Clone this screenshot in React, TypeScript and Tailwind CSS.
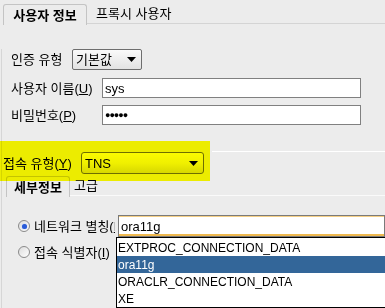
import React from "react";

const F = { fontFamily: '"Liberation Sans","Noto Sans CJK KR",sans-serif' };

function Arrow() {
  return (
    <svg width="9" height="5" viewBox="0 0 9 5">
      <polygon points="0,0 9,0 4.5,5" fill="#000" />
    </svg>
  );
}

function Radio({ checked }: { checked?: boolean }) {
  return (
    <div className="w-[12px] h-[12px] rounded-full border border-[#8a8a8a] bg-gradient-to-br from-[#dcdcdc] to-[#ffffff] flex items-center justify-center shrink-0">
      {checked && <div className="w-[5px] h-[5px] rounded-full bg-[#2a5bd7] shadow-[0_0_1px_#6f9cff]" />}
    </div>
  );
}

export default function App() {
  return (
    <div style={F} className="relative w-[385px] h-[308px] bg-[#ececec] overflow-hidden text-[13px] text-black leading-none">
      {/* top tabs */}
      <div className="flex items-end h-[24px] pl-[3px]">
        <div className="h-[21px] w-[84px] border border-b-0 border-[#c4c4c4] rounded-t-[3px] bg-[#ececec] flex items-center justify-center font-bold text-[13px] relative top-px">
          사용자 정보
        </div>
        <div className="flex-1 h-[21px] border-b border-[#d4d4d4] flex items-center pl-[9px]">
          프록시 사용자
        </div>
      </div>

      <div className="border-l border-[#d6d6d6] ml-[1px] h-[284px]">
        {/* auth type */}
        <div className="flex items-center h-[21px] mt-[25px] pl-[9px]">
          <div className="w-[61px]">인증 유형</div>
          <div className="w-[70px] h-[21px] border border-[#6e6e6e] rounded-[2px] bg-gradient-to-b from-[#fafafa] to-[#e2e2e2] flex items-center justify-between pl-[3px] pr-[5px]">
            <span>기본값</span>
            <Arrow />
          </div>
        </div>

        <div className="flex items-center h-[20px] mt-[8px] pl-[9px]">
          <div className="w-[91px]">
            사용자 이름(<span className="underline">U</span>)
          </div>
          <div className="w-[259px] h-[20px] border border-[#808080] bg-white flex items-center pl-[2px]">
            sys
          </div>
        </div>

        <div className="flex items-center h-[20px] mt-[7px] pl-[9px]">
          <div className="w-[91px]">
            비밀번호(<span className="underline">P</span>)
          </div>
          <div className="w-[259px] h-[20px] border border-[#808080] bg-white flex items-center pl-[2px] text-[9px] tracking-[-1px]">
            ●●●●●
          </div>
        </div>

        {/* connection type */}
        <div className="flex items-start h-[22px] mt-[27px]">
          <div className="w-[79px] h-[22px] flex items-center pl-[1px] whitespace-nowrap">
            접속 유형(<span className="underline">Y</span>)
          </div>
          <div className="w-[123px] h-[22px] border border-[#6e6e6e] rounded-[3px] bg-gradient-to-b from-[#fbfbfb] via-[#f0f0f0] to-[#d8d8d8] flex items-center justify-between pl-[3px] pr-[5px]">
            <span>TNS</span>
            <Arrow />
          </div>
          <div className="flex-1 ml-[8px] h-px bg-white -mt-px" />
        </div>

        {/* sub tabs */}
        <div className="flex items-end h-[22px] pl-[4px]">
          <div className="h-[21px] w-[64px] border border-b-0 border-[#c4c4c4] rounded-t-[3px] flex items-center justify-center font-bold relative top-px">
            세부정보
          </div>
          <div className="flex-1 h-[21px] border-b border-[#fafafa] flex items-center pl-[4px]">
            고급
          </div>
        </div>

        {/* radio 1 */}
        <div className="flex items-center h-[22px] mt-[19px] pl-[16px]">
          <Radio checked />
          <div className="w-[81px] ml-[4px] mr-[3px] overflow-hidden whitespace-nowrap">
            네트워크 별칭(<span className="underline">N</span>)
          </div>
          <div className="flex-1 h-[22px] border border-[#7a7a7a] bg-white shadow-[inset_0_1px_0_#f5cf85,inset_0_-2px_0_#efb94f] flex items-center pl-[2px]">
            ora11g
          </div>
        </div>

        {/* radio 2 */}
        <div className="flex items-center h-[20px] mt-[5px] pl-[16px]">
          <Radio />
          <div className="ml-[4px] whitespace-nowrap">
            접속 식별자(<span className="underline">I</span>)
          </div>
        </div>
      </div>

      {/* dropdown list */}
      <div className="absolute left-[116px] top-[237px] w-[275px] h-[71px] border border-black bg-white z-10 text-[12px] pt-px">
        <div className="h-[17px] flex items-center pl-[1px]">EXTPROC_CONNECTION_DATA</div>
        <div className="h-[17px] flex items-center pl-[1px] bg-[#336699] text-white">ora11g</div>
        <div className="h-[17px] flex items-center pl-[1px]">ORACLR_CONNECTION_DATA</div>
        <div className="h-[17px] flex items-center pl-[1px]">XE</div>
      </div>

      {/* highlight annotation */}
      <div className="absolute left-0 top-[141px] w-[210px] h-[40px] bg-[#ffff00] mix-blend-multiply pointer-events-none z-20" />
    </div>
  );
}
